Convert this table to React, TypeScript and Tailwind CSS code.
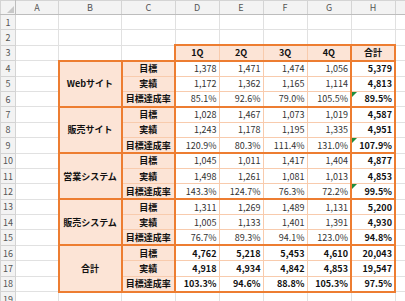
import React from "react";

type Group = {
  name: string;
  rows: { label: string; values: string[]; total: string }[];
  bold?: boolean;
};

const groups: Group[] = [
  {
    name: "Webサイト",
    rows: [
      { label: "目標", values: ["1,378", "1,471", "1,474", "1,056"], total: "5,379" },
      { label: "実績", values: ["1,172", "1,362", "1,165", "1,114"], total: "4,813" },
      { label: "目標達成率", values: ["85.1%", "92.6%", "79.0%", "105.5%"], total: "89.5%" },
    ],
  },
  {
    name: "販売サイト",
    rows: [
      { label: "目標", values: ["1,028", "1,467", "1,073", "1,019"], total: "4,587" },
      { label: "実績", values: ["1,243", "1,178", "1,195", "1,335"], total: "4,951" },
      { label: "目標達成率", values: ["120.9%", "80.3%", "111.4%", "131.0%"], total: "107.9%" },
    ],
  },
  {
    name: "営業システム",
    rows: [
      { label: "目標", values: ["1,045", "1,011", "1,417", "1,404"], total: "4,877" },
      { label: "実績", values: ["1,498", "1,261", "1,081", "1,013"], total: "4,853" },
      { label: "目標達成率", values: ["143.3%", "124.7%", "76.3%", "72.2%"], total: "99.5%" },
    ],
  },
  {
    name: "販売システム",
    rows: [
      { label: "目標", values: ["1,311", "1,269", "1,489", "1,131"], total: "5,200" },
      { label: "実績", values: ["1,005", "1,133", "1,401", "1,391"], total: "4,930" },
      { label: "目標達成率", values: ["76.7%", "89.3%", "94.1%", "123.0%"], total: "94.8%" },
    ],
  },
  {
    name: "合計",
    bold: true,
    rows: [
      { label: "目標", values: ["4,762", "5,218", "5,453", "4,610"], total: "20,043" },
      { label: "実績", values: ["4,918", "4,934", "4,842", "4,853"], total: "19,547" },
      { label: "目標達成率", values: ["103.3%", "94.6%", "88.8%", "105.3%"], total: "97.5%" },
    ],
  },
];

const letters = ["A", "B", "C", "D", "E", "F", "G", "H", ""];

const rowNum = "border border-[#D4D4D4] bg-[#F3F3F3] p-0 text-center text-[9px] font-normal text-[#555]";
const blank = "border border-[#E1E1E1] p-0";
const fill = "bg-[#FCE4D6]";

// thin orange lines inside the table, thick on the outside of each block
const numCell = "border border-[#F8CBAD] p-0 pr-[2px] text-right";

function Triangle() {
  return (
    <svg className="absolute left-0 top-0" width="5" height="5" viewBox="0 0 5 5">
      <polygon points="0,0 5,0 0,5" fill="#1E8E3E" />
    </svg>
  );
}

export default function App() {
  let rowNo = 3;

  return (
    <div className="h-[301px] w-[405px] overflow-hidden bg-white font-['Noto_Sans_CJK_JP',sans-serif] text-[9px] leading-none text-[#333]">
      <table className="w-[430px] table-fixed border-collapse">
        <colgroup>
          <col className="w-[15px]" />
          <col className="w-[43px]" />
          <col className="w-[63px]" />
          <col className="w-[53.5px]" />
          <col className="w-[44px]" />
          <col className="w-[44px]" />
          <col className="w-[44px]" />
          <col className="w-[44px]" />
          <col className="w-[44px]" />
          <col className="w-[35.5px]" />
        </colgroup>
        <tbody>
          <tr className="h-[14px]">
            <td className="relative border border-[#D4D4D4] border-b-[#BDBDBD] border-r-[#BDBDBD] bg-[#F3F3F3] p-0">
              <svg className="absolute bottom-[1px] right-[1px]" width="7" height="7" viewBox="0 0 7 7">
                <polygon points="7,0 7,7 0,7" fill="#C8C8C8" />
              </svg>
            </td>
            {letters.map((l, i) => (
              <td
                key={i}
                className="border border-[#D4D4D4] border-b-[#BDBDBD] bg-[#F3F3F3] p-0 text-center text-[9px] text-[#555]"
              >
                {l}
              </td>
            ))}
          </tr>
          {[1, 2].map((n) => (
            <tr key={n} className="h-[15.4px]">
              <td className={rowNum}>{n}</td>
              {letters.map((_, i) => (
                <td key={i} className={blank} />
              ))}
            </tr>
          ))}
          <tr className="h-[15.4px]">
            <td className={rowNum}>3</td>
            <td className={blank} />
            <td className={blank} />
            <td className={blank} />
            {["1Q", "2Q", "3Q", "4Q"].map((q, i) => (
              <td
                key={q}
                className={`border border-[#F8CBAD] border-y-2 border-y-[#ED7D31] ${fill} p-0 text-center font-bold text-[#111] ${
                  i === 0 ? "border-l-2 border-l-[#ED7D31]" : ""
                }`}
              >
                {q}
              </td>
            ))}
            <td className={`border-2 border-[#ED7D31] ${fill} p-0 text-center font-bold text-[#111]`}>合計</td>
            <td className={blank} />
          </tr>
          {groups.map((g) =>
            g.rows.map((r, ri) => {
              rowNo += 1;
              const top = ri === 0 ? "border-t-2 border-t-[#ED7D31]" : "";
              const bottom = ri === 2 ? "border-b-2 border-b-[#ED7D31]" : "";
              const weight = g.bold ? "font-bold text-[#111]" : "";
              return (
                <tr key={g.name + ri} className="h-[15.4px]">
                  <td className={rowNum}>{rowNo}</td>
                  <td className={blank} />
                  {ri === 0 && (
                    <td
                      rowSpan={3}
                      className={`border-2 border-[#ED7D31] ${fill} p-0 text-center font-bold text-[#111]`}
                    >
                      {g.name}
                    </td>
                  )}
                  <td
                    className={`border border-[#F8CBAD] border-x-2 border-x-[#ED7D31] ${top} ${bottom} ${fill} p-0 text-center font-bold text-[#111]`}
                  >
                    {r.label}
                  </td>
                  {r.values.map((v, vi) => (
                    <td key={vi} className={`${numCell} ${top} ${bottom} ${weight}`}>
                      {v}
                    </td>
                  ))}
                  <td
                    className={`relative border border-[#F8CBAD] border-x-2 border-x-[#ED7D31] ${top} ${bottom} p-0 pr-[2px] text-right font-bold text-[#111]`}
                  >
                    {ri === 2 && rowNo <= 12 && <Triangle />}
                    {r.total}
                  </td>
                  <td className={blank} />
                </tr>
              );
            })
          )}
          <tr className="h-[15.4px]">
            <td className={rowNum}>19</td>
            {letters.map((_, i) => (
              <td key={i} className={blank} />
            ))}
          </tr>
        </tbody>
      </table>
    </div>
  );
}
